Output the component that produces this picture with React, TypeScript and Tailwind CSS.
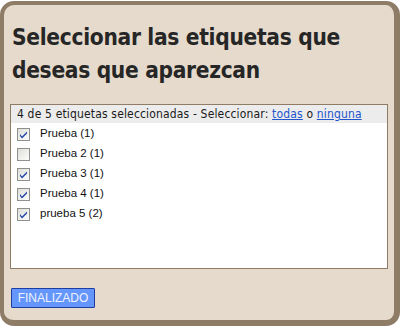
import React from "react";

function Check({ checked }: { checked: boolean }) {
  return (
    <svg width="13" height="13" viewBox="0 0 13 13" className="shrink-0">
      <defs>
        <linearGradient id="cbg" x1="0" y1="0" x2="1" y2="1">
          <stop offset="0" stopColor="#dcdcd7" />
          <stop offset="1" stopColor="#ffffff" />
        </linearGradient>
      </defs>
      <rect x="0.5" y="0.5" width="12" height="12" fill="url(#cbg)" stroke="#8e8f8f" />
      {checked && (
        <path d="M3 6 L5 8.5 L10 3.5 L10 5.5 L5 10.5 L3 8 Z" fill="#2144a8" />
      )}
    </svg>
  );
}

const items: [string, boolean][] = [
  ["Prueba (1)", true],
  ["Prueba 2 (1)", false],
  ["Prueba 3 (1)", true],
  ["Prueba 4 (1)", true],
  ["prueba 5 (2)", true],
];

const cond = { fontFamily: '"DejaVu Sans", sans-serif', fontStretch: "condensed" as const };

export default function App() {
  return (
    <div className="w-[402px] h-[329px] bg-white pt-[1px]">
      <div className="w-[400px] h-[325px] bg-[#e5dacb] border-l-[4px] border-t-[4px] border-r-[6px] border-b-[6px] border-[#8f7c66] rounded-[14px] px-[6px] flex flex-col">
        <h1
          className="text-[#262626] font-bold text-[22.5px] leading-[33px] tracking-[-0.3px] mt-[16px] ml-[2px] font-stretch-condensed"
          style={cond}
        >
          Seleccionar las etiquetas que deseas que aparezcan
        </h1>
        <div className="mt-[17px] h-[165px] bg-white border border-[#8f7c66] flex flex-col">
          <div
            className="h-[18px] bg-[#ececec] text-[12px] leading-[18px] tracking-[0.16px] text-[#1a1a1a] pl-[6px] font-stretch-condensed"
            style={cond}
          >
            4 de 5 etiquetas seleccionadas - Seleccionar:{" "}
            <span className="text-[#2255cc] underline">todas</span> o{" "}
            <span className="text-[#2255cc] underline">ninguna</span>
          </div>
          <div className="flex flex-col pt-[1px]">
            {items.map(([label, c]) => (
              <div key={label} className="h-[20px] flex items-center pl-[6px] gap-[10px]">
                <Check checked={c} />
                <span
                  className="text-[11.5px] text-[#111]"
                  style={{ fontFamily: '"Liberation Sans", Arial, sans-serif' }}
                >
                  {label}
                </span>
              </div>
            ))}
          </div>
        </div>
        <div className="mt-[15px] ml-[1px]">
          <button
            className="w-[84px] h-[20px] bg-[#6496fb] border border-[#1d3da0] text-[#eef2ff] text-[12px] leading-[18px] rounded-[1px]"
            style={{ fontFamily: '"Liberation Sans", Arial, sans-serif' }}
          >
            FINALIZADO
          </button>
        </div>
      </div>
    </div>
  );
}
